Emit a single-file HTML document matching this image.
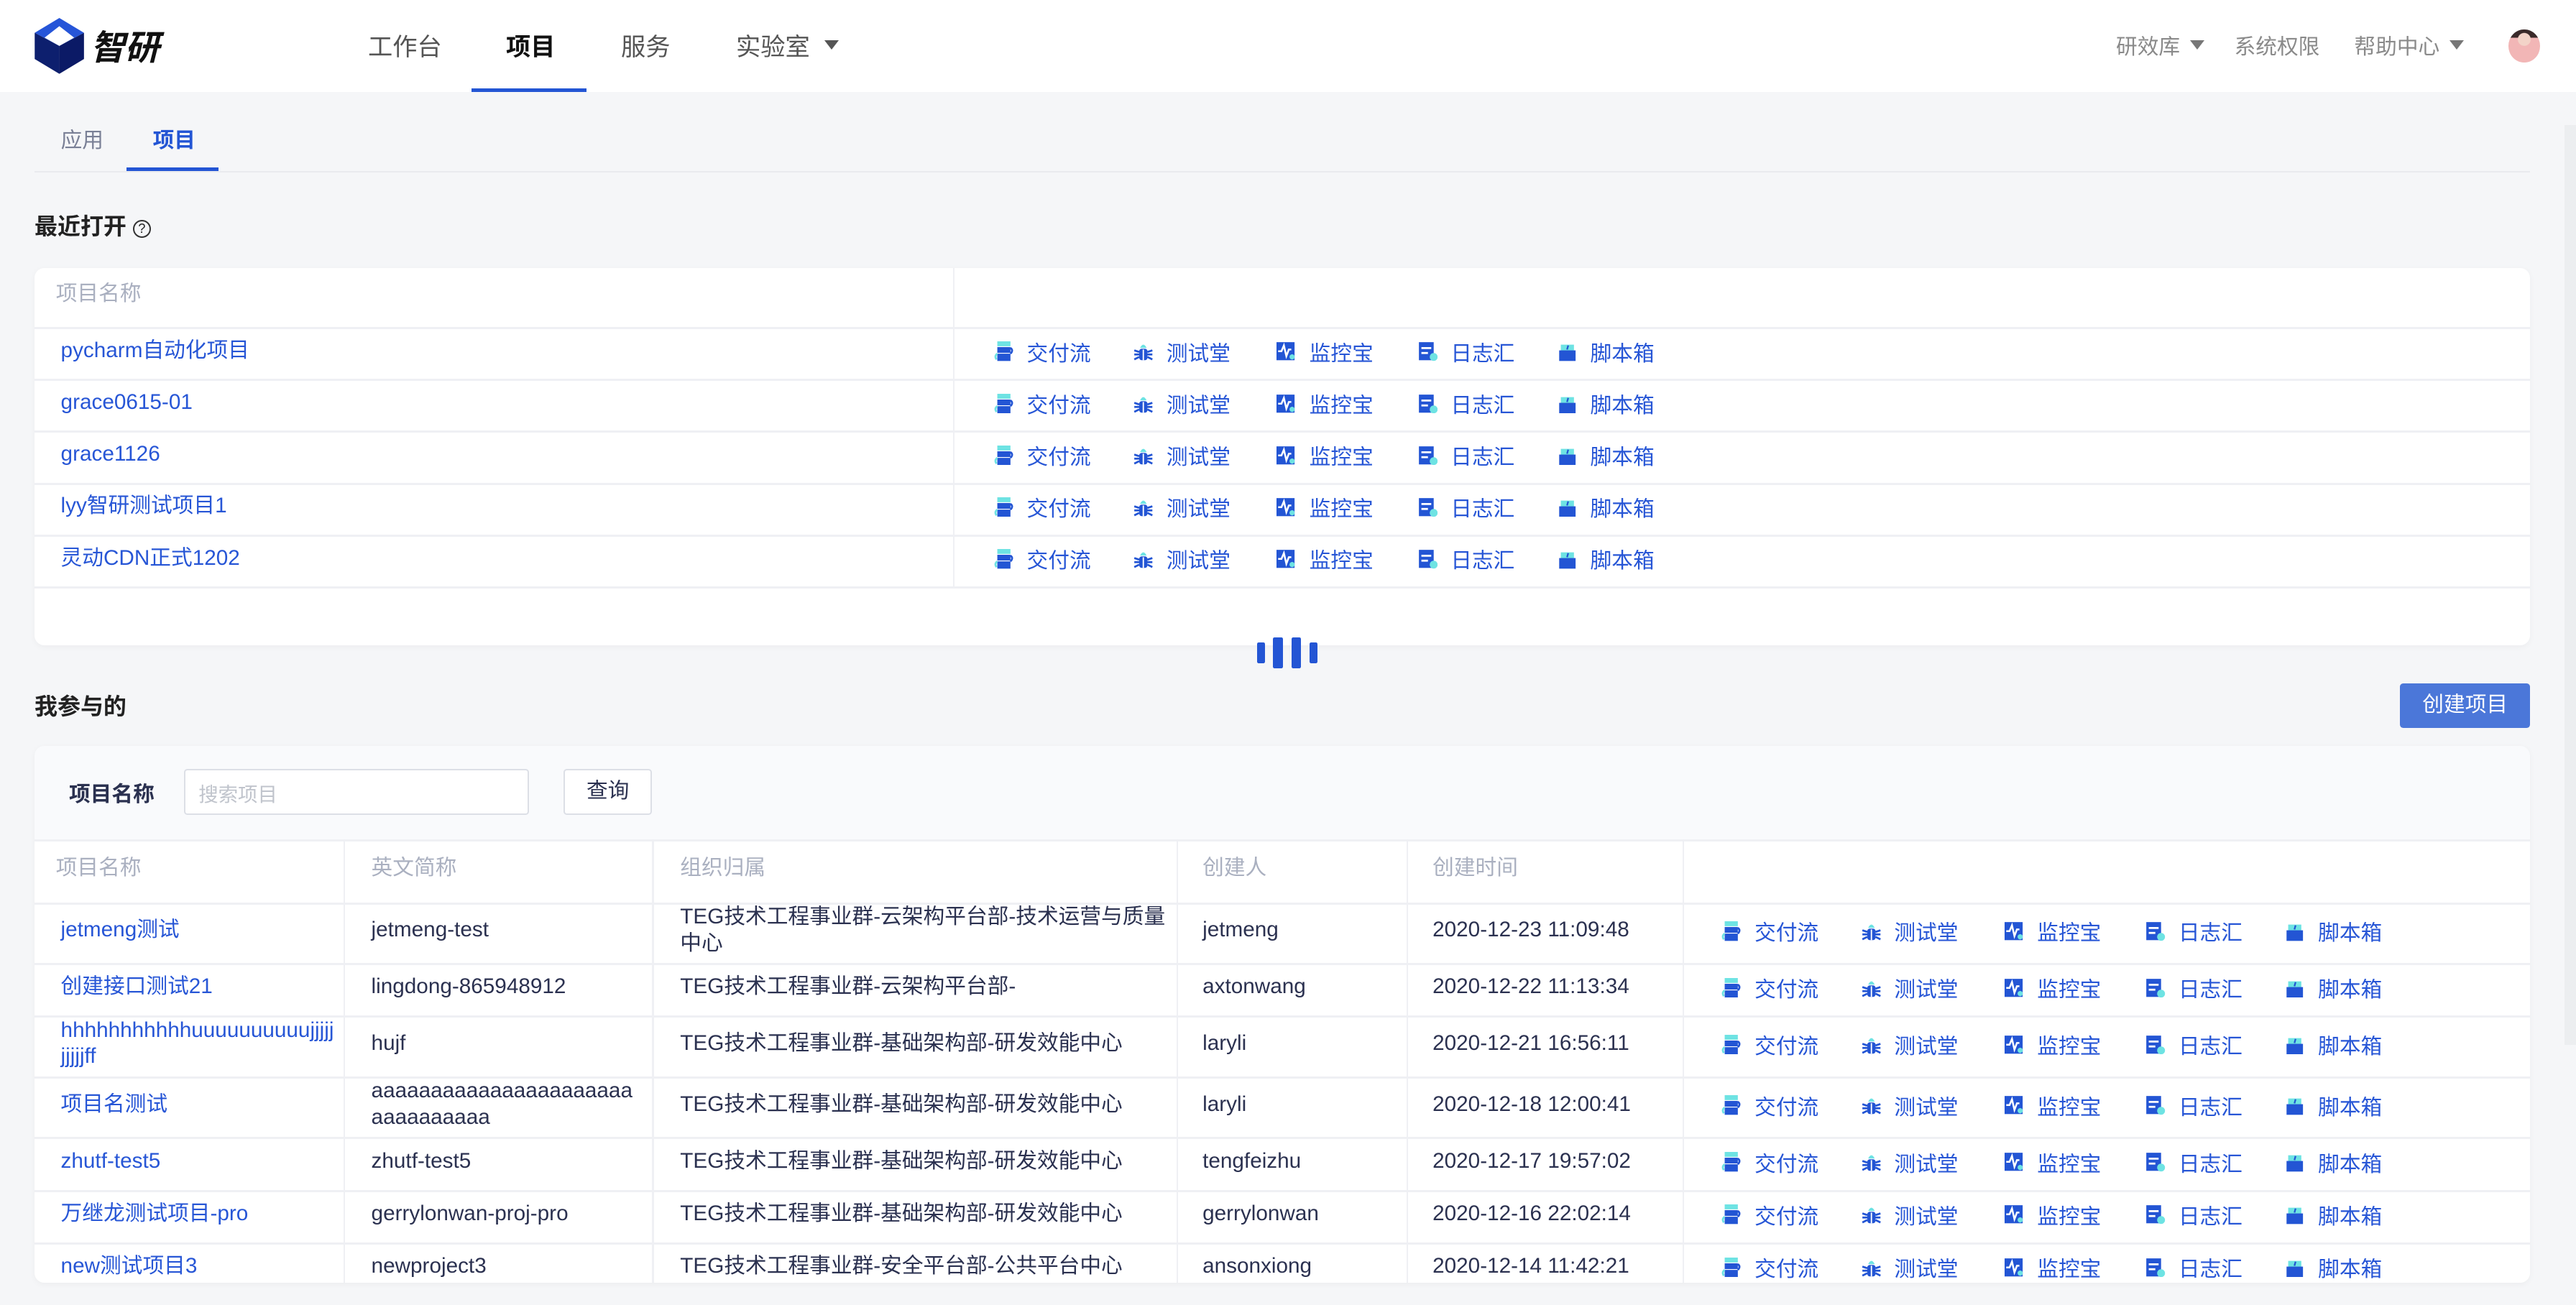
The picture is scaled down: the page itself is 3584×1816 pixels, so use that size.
<!DOCTYPE html>
<html><head><meta charset="utf-8"><style>
*{margin:0;padding:0;box-sizing:border-box}
html,body{width:3584px;height:1816px;overflow:hidden;background:#f5f6f8}
#r{width:1568px;height:795px;zoom:2.285714;position:relative;font-family:"Liberation Sans","Noto Sans CJK SC",sans-serif;color:#2b3150;font-size:13px;background:#f5f6f8;overflow:hidden}
.a{position:absolute}
.hdr{left:0;top:0;width:1568px;height:56px;background:#fff}
.nav{top:16px;font-size:15px;color:#555}
.rn{top:18px;font-size:13px;color:#8a8a8a}
.tri{display:inline-block;width:0;height:0;border-left:4.5px solid transparent;border-right:4.5px solid transparent;border-top:6px solid #777;vertical-align:middle;margin-left:6px;position:relative;top:-2px}
.card{background:#fff;border-radius:6px;box-shadow:0 1px 4px rgba(0,0,0,.04)}
.row{position:absolute;left:0;width:1519px;border-top:1.5px solid #eff0f4}
.c{position:absolute;top:0;height:100%;display:flex;align-items:center;line-height:16px;padding-bottom:4px}
.lk{color:#2756d6}
.act{position:absolute;top:0;height:100%;display:flex;align-items:center;color:#2756d6;padding-bottom:3px}
.act svg{width:12px;height:12px;margin-right:8px}
.vd{position:absolute;top:0;bottom:0;width:1px;background:#eff0f4}
.th{color:#aab0c0}
</style></head><body><div id="r">
<svg width="0" height="0" style="position:absolute">
<defs>
<symbol id="i1" viewBox="0 0 12 12"><rect x="2" y="0" width="8" height="3" fill="#6ee3e3"/><rect x="2" y="3.5" width="8" height="3.5" fill="#2355d4"/><rect x="2" y="7.5" width="8" height="4.5" fill="#2355d4"/><path d="M10 4 Q12 5.5 10 7.5" stroke="#2355d4" stroke-width="1.2" fill="none"/><path d="M2 7.5 Q0 9 1.5 11" stroke="#6ee3e3" stroke-width="1.2" fill="none"/></symbol>
<symbol id="i2" viewBox="0 0 12 12"><path d="M4 4 Q6 0 8 4Z" fill="#6ee3e3"/><rect x="3.5" y="4.5" width="5" height="7" rx="1.5" fill="#2355d4"/><path d="M0.5 5.5 L3.5 6.5 M0.5 11 L3.5 9.5 M11.5 5.5 L8.5 6.5 M11.5 11 L8.5 9.5 M0.5 8 H11.5" stroke="#2355d4" stroke-width="1.2"/><path d="M6 5 V11.5" stroke="#fff" stroke-width=".8"/></symbol>
<symbol id="i3" viewBox="0 0 12 12"><rect x="0" y="0.5" width="11" height="11" fill="#2355d4"/><path d="M1 6 H3 L4.5 2.5 L6 9 L7.5 5 H9" stroke="#fff" stroke-width="1.1" fill="none"/><circle cx="9.5" cy="9.5" r="1.6" fill="#6ee3e3"/></symbol>
<symbol id="i4" viewBox="0 0 12 12"><rect x="0.5" y="0.5" width="9" height="11" fill="#2355d4"/><rect x="2" y="3.5" width="6" height="1.2" fill="#fff"/><rect x="2" y="6.5" width="4" height="1.2" fill="#fff"/><circle cx="9.5" cy="9.5" r="2.4" fill="#6ee3e3"/></symbol>
<symbol id="i5" viewBox="0 0 12 12"><path d="M2 2 H10 V6 H2Z" fill="#6ee3e3"/><rect x="1" y="5.5" width="10" height="6.5" fill="#2355d4"/><path d="M6.5 2.5 L5.8 5" stroke="#2355d4" stroke-width="1"/></symbol>
</defs></svg>

<div class="a hdr"></div>
<svg class="a" style="left:20px;top:11px" width="32" height="34" viewBox="0 0 32 34"><path d="M16 0 L31 9 L16 17 L1 9Z" fill="#2655d8"/><path d="M1 9 L16 17 L16 34 L1 25Z" fill="#0d1f6e"/><path d="M31 9 L16 17 L16 34 L31 25Z" fill="#0b1a66"/><path d="M7 12 L16 5 L25 12 L16 17Z" fill="#fff"/></svg>
<div class="a" style="left:55px;top:12px;font-size:21px;font-weight:bold;font-style:italic;color:#111">智研</div>
<div class="a nav" style="left:224px">工作台</div>
<div class="a nav" style="left:308px;color:#111;font-weight:bold">项目</div>
<div class="a" style="left:287px;top:54px;width:70px;height:2px;background:#2355d4"></div>
<div class="a nav" style="left:378px">服务</div>
<div class="a nav" style="left:448px">实验室<span class="tri" style="margin-left:9px;border-top-color:#555"></span></div>
<div class="a rn" style="left:1288px">研效库<span class="tri"></span></div>
<div class="a rn" style="left:1360px">系统权限</div>
<div class="a rn" style="left:1433px">帮助中心<span class="tri"></span></div>
<div class="a" style="left:1527px;top:18px;width:19px;height:20px;border-radius:50%;background:radial-gradient(circle at 50% 30%,#f3d3c8 0 22%,transparent 24%),linear-gradient(#3a2a2a 0 25%,#f2b6b6 25%)"></div>
<div class="a" style="left:1561px;top:76px;width:7px;height:560px;background:#eceef0"></div>

<div class="a" style="left:37px;top:75px;font-size:13px;color:#7a8096">应用</div>
<div class="a" style="left:93px;top:75px;font-size:13px;color:#2355d4;font-weight:bold">项目</div>
<div class="a" style="left:21px;top:104px;width:1519px;height:1px;background:#e9eaee"></div>
<div class="a" style="left:77px;top:102px;width:56px;height:2px;background:#2355d4"></div>

<div class="a" style="left:21px;top:127px;font-size:14px;font-weight:bold;color:#222">最近打开 <span style="display:inline-block;width:11px;height:11px;border:1.2px solid #333;border-radius:50%;font-size:8px;line-height:9px;text-align:center;vertical-align:1px;font-weight:normal">?</span></div>

<div class="a card" style="left:21px;top:163px;width:1519px;height:230px">
 <div class="vd" style="left:559px;top:0;height:194px"></div>
 <div class="c th" style="left:13px;top:0;height:36px">项目名称</div>
 <div id="recent"></div>
</div>

<div class="a" style="left:765px;top:391px;width:5px;height:13px;background:#2355d4;border-radius:1px"></div>
<div class="a" style="left:775px;top:388px;width:6px;height:19px;background:#2355d4;border-radius:1px"></div>
<div class="a" style="left:786px;top:388px;width:6px;height:19px;background:#2355d4;border-radius:1px"></div>
<div class="a" style="left:797px;top:391px;width:5px;height:13px;background:#2355d4;border-radius:1px"></div>

<div class="a" style="left:21px;top:419px;font-size:14px;font-weight:bold;color:#222">我参与的</div>
<div class="a" style="left:1461px;top:416px;width:79px;height:27px;background:#4b77d9;border-radius:2px;color:#fff;font-size:13px;text-align:center;line-height:26px">创建项目</div>

<div class="a card" style="left:21px;top:454px;width:1519px;height:327px;overflow:hidden;background:#f9fafc">
 <div class="a" style="left:21px;top:19px;font-size:13px;font-weight:bold;color:#2b3150">项目名称</div>
 <div class="a" style="left:91px;top:14px;width:210px;height:28px;border:1px solid #dcdfe6;background:#fff;border-radius:2px;color:#c0c4cc;font-size:12px;padding:5px 8px">搜索项目</div>
 <div class="a" style="left:322px;top:14px;width:54px;height:28px;border:1px solid #dcdfe6;background:#fff;border-radius:2px;font-size:13px;text-align:center;line-height:25px">查询</div>
 <div class="a" style="left:0;top:57px;width:1519px;height:270px;background:#fff;border-top:1.5px solid #eff0f4">
  <div class="vd" style="left:188px"></div><div class="vd" style="left:376px"></div><div class="vd" style="left:695px"></div><div class="vd" style="left:835px"></div><div class="vd" style="left:1003px"></div>
  <div class="c th" style="left:13px;height:37px">项目名称</div>
  <div class="c th" style="left:205px;height:37px">英文简称</div>
  <div class="c th" style="left:393px;height:37px">组织归属</div>
  <div class="c th" style="left:711px;height:37px">创建人</div>
  <div class="c th" style="left:851px;height:37px">创建时间</div>
  <div id="tbl"></div>
 </div>
</div>

<script>
function acts(x){var n=[['i1','交付流'],['i2','测试堂'],['i3','监控宝'],['i4','日志汇'],['i5','脚本箱']],o=[0,85,172,258,343],s='';
for(var i=0;i<5;i++)s+='<div class="act" style="left:'+(x+o[i])+'px"><svg><use href="#'+n[i][0]+'"/></svg>'+n[i][1]+'</div>';return s;}
var rec=['pycharm自动化项目','grace0615-01','grace1126','lyy智研测试项目1','灵动CDN正式1202'],h='';
for(var i=0;i<5;i++){h+='<div class="row" style="top:'+(36+i*31.6)+'px;height:31.6px"><div class="c lk" style="left:16px">'+rec[i]+'</div>'+acts(584)+'</div>';}
h+='<div class="row" style="top:194px;height:1px"></div>';
document.getElementById('recent').innerHTML=h;
var rows=[
['jetmeng测试','jetmeng-test','TEG技术工程事业群-云架构平台部-技术运营与质量<br>中心','jetmeng','2020-12-23 11:09:48',37],
['创建接口测试21','lingdong-865948912','TEG技术工程事业群-云架构平台部-','axtonwang','2020-12-22 11:13:34',32],
['hhhhhhhhhhhuuuuuuuuuujjjjj<br>jjjjjff','hujf','TEG技术工程事业群-基础架构部-研发效能中心','laryli','2020-12-21 16:56:11',37],
['项目名测试','aaaaaaaaaaaaaaaaaaaaaa<br>aaaaaaaaaa','TEG技术工程事业群-基础架构部-研发效能中心','laryli','2020-12-18 12:00:41',37],
['zhutf-test5','zhutf-test5','TEG技术工程事业群-基础架构部-研发效能中心','tengfeizhu','2020-12-17 19:57:02',32],
['万继龙测试项目-pro','gerrylonwan-proj-pro','TEG技术工程事业群-基础架构部-研发效能中心','gerrylonwan','2020-12-16 22:02:14',32],
['new测试项目3','newproject3','TEG技术工程事业群-安全平台部-公共平台中心','ansonxiong','2020-12-14 11:42:21',32]];
var t='',y=37;
for(var i=0;i<rows.length;i++){var r=rows[i];
t+='<div class="row" style="top:'+y+'px;height:'+r[5]+'px"><div class="c lk" style="left:16px">'+r[0]+'</div><div class="c" style="left:205px">'+r[1]+'</div><div class="c" style="left:393px">'+r[2]+'</div><div class="c" style="left:711px">'+r[3]+'</div><div class="c" style="left:851px">'+r[4]+'</div>'+acts(1027)+'</div>';y+=r[5];}
document.getElementById('tbl').innerHTML=t;
</script>
</div></body></html>
